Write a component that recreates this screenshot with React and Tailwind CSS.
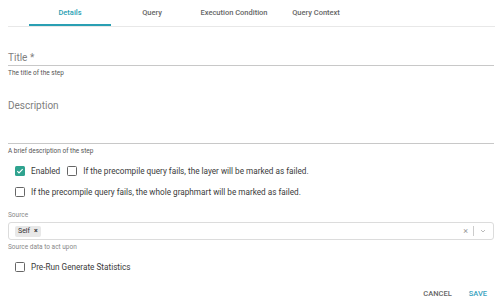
import React, { useState } from 'react';

function Box({ checked, onClick }) {
  return (
    <span
      onClick={onClick}
      className={`flex h-[10px] w-[10px] shrink-0 items-center justify-center rounded-[1.5px] ${
        checked ? 'bg-[#2fa38f]' : 'border-[1.5px] border-[#666]'
      }`}
    >
      {checked && (
        <svg width="8" height="8" viewBox="0 0 24 24" fill="none" stroke="white" strokeWidth="3.5">
          <path d="M4 12.5l5 5L20 6.5" />
        </svg>
      )}
    </span>
  );
}

function App() {
  const [tab, setTab] = useState('Details');
  const [enabled, setEnabled] = useState(true);
  const [layerFail, setLayerFail] = useState(false);
  const [martFail, setMartFail] = useState(false);
  const [stats, setStats] = useState(false);

  const tabs = ['Details', 'Query', 'Execution Condition', 'Query Context'];

  return (
    <div className="h-[300px] w-[500px] overflow-hidden bg-white font-['Roboto',sans-serif] text-[#3a3a3a]">
      <div className="ml-[8px] mr-[5px] flex h-[27px] border-b border-[#e8e8e8] pl-[21px]">
        {tabs.map((t) => (
          <button
            key={t}
            onClick={() => setTab(t)}
            className={`flex w-[82px] items-center justify-center pt-[2px] text-[7.5px] font-medium ${
              tab === t ? 'border-b-2 border-[#2a9fb3] text-[#2a9fb3]' : 'pb-[2px] text-[#666]'
            }`}
          >
            {t}
          </button>
        ))}
      </div>

      <div className="ml-[8px] mr-[6px]">
        <div className="mt-[25px] border-b border-[#c8c8c8] pb-[1px] text-[10px] leading-[12px] text-[#808080]">
          Title *
        </div>
        <div className="mt-[3px] text-[6.5px] leading-[8px] text-[#555]">The title of the step</div>

        <div className="mt-[23px] border-b border-[#c8c8c8] pb-[31px] text-[10px] leading-[12px] text-[#808080]">
          Description
        </div>
        <div className="mt-[3px] text-[6.5px] leading-[8px] text-[#555]">A brief description of the step</div>

        <div className="mt-[10px] flex h-[12px] items-center pl-[7px] text-[8.2px]">
          <Box checked={enabled} onClick={() => setEnabled(!enabled)} />
          <span className="ml-[6px]">Enabled</span>
          <span className="ml-[7px]">
            <Box checked={layerFail} onClick={() => setLayerFail(!layerFail)} />
          </span>
          <span className="ml-[6px]">If the precompile query fails, the layer will be marked as failed.</span>
        </div>

        <div className="mt-[9px] flex h-[12px] items-center pl-[7px] text-[8.2px]">
          <Box checked={martFail} onClick={() => setMartFail(!martFail)} />
          <span className="ml-[6px]">If the precompile query fails, the whole graphmart will be marked as failed.</span>
        </div>

        <div className="mt-[13px] text-[6.5px] leading-[8px] text-[#888]">Source</div>
        <div className="mt-[3px] flex h-[18px] items-center rounded-[3px] border border-[#dcdcdc] pl-[6px] pr-[4px]">
          <span className="flex h-[11px] items-center gap-[4px] rounded-[2px] bg-[#e8e8e8] px-[3px] text-[7px] text-[#333]">
            Self <span className="text-[7px] font-bold leading-none">×</span>
          </span>
          <span className="ml-auto text-[9px] leading-none text-[#999]">×</span>
          <span className="mx-[5px] h-[10px] w-px bg-[#ccc]" />
          <svg width="8" height="8" viewBox="0 0 24 24" fill="none" stroke="#999" strokeWidth="2" className="mr-[2px]">
            <path d="M6 9l6 6 6-6" />
          </svg>
        </div>
        <div className="mt-[3px] text-[6.5px] leading-[8px] text-[#888]">Source data to act upon</div>

        <div className="mt-[10px] flex h-[12px] items-center pl-[7px] text-[8.2px]">
          <Box checked={stats} onClick={() => setStats(!stats)} />
          <span className="ml-[6px]">Pre-Run Generate Statistics</span>
        </div>

        <div className="mt-[16px] flex h-[10px] items-center justify-end gap-[17px] pr-[7px] text-[7.5px] font-medium">
          <button className="text-[#666]">CANCEL</button>
          <button className="text-[#3aa3c0]">SAVE</button>
        </div>
      </div>
    </div>
  );
}

export default App;
